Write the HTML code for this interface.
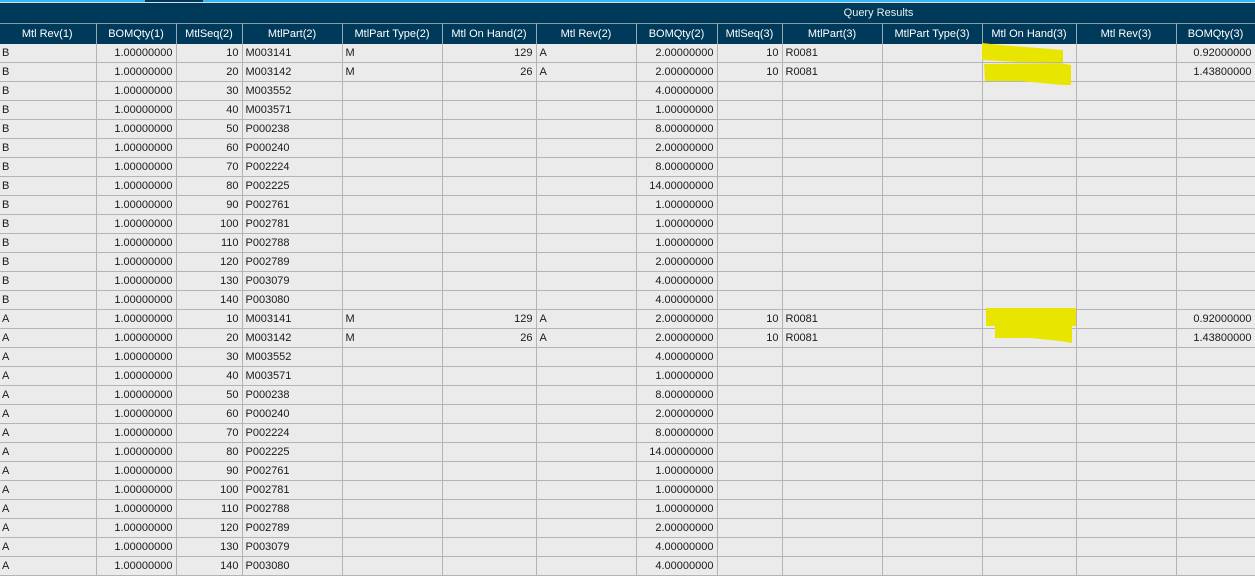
<!DOCTYPE html>
<html><head><meta charset="utf-8"><style>
*{margin:0;padding:0;box-sizing:border-box}
body{width:1255px;height:564px;overflow:hidden;background:#ebebeb;font-family:"Liberation Sans",Arial,sans-serif;font-size:11px;color:#1a1a1a;position:relative}
#top{position:absolute;left:0;top:0;width:1255px;height:2px;background:#3ab4f2}
#tab{position:absolute;left:145px;top:0;width:58px;height:2px;background:#003a5a}
#gap{position:absolute;left:0;top:2px;width:1255px;height:1px;background:#d8dde0}
#title{position:absolute;left:0;top:3px;width:1255px;height:20px;background:#003a5a;color:#e6eef2;text-align:center;padding-left:502px;line-height:21px;font-size:11px}
table{position:absolute;left:-1px;top:23px;border-collapse:collapse;table-layout:fixed;width:1256px}
th{background:#003a5a;color:#fff;font-weight:normal;height:20px;border-top:1px solid #8a9aa4;border-right:1px solid #9aa8b0;text-align:center;white-space:nowrap;overflow:hidden}
td{height:19px;border-right:1px solid #b4b4b4;border-bottom:1px solid #b4b4b4;padding:0 3px;white-space:nowrap;overflow:hidden;line-height:18px}
td.r{text-align:right}
#hl{position:absolute;left:0;top:0}
</style></head><body>
<div id="top"></div><div id="tab"></div><div id="gap"></div>
<div id="title">Query Results</div>
<table>
<colgroup><col style="width:97px"><col style="width:80px"><col style="width:66px"><col style="width:100px"><col style="width:100px"><col style="width:94px"><col style="width:100px"><col style="width:81px"><col style="width:65px"><col style="width:100px"><col style="width:100px"><col style="width:94px"><col style="width:100px"><col style="width:79px"></colgroup>
<tr><th>Mtl Rev(1)</th><th>BOMQty(1)</th><th>MtlSeq(2)</th><th>MtlPart(2)</th><th>MtlPart Type(2)</th><th>Mtl On Hand(2)</th><th>Mtl Rev(2)</th><th>BOMQty(2)</th><th>MtlSeq(3)</th><th>MtlPart(3)</th><th>MtlPart Type(3)</th><th>Mtl On Hand(3)</th><th>Mtl Rev(3)</th><th>BOMQty(3)</th></tr>
<tr><td>B</td><td class="r">1.00000000</td><td class="r">10</td><td>M003141</td><td>M</td><td class="r">129</td><td>A</td><td class="r">2.00000000</td><td class="r">10</td><td>R0081</td><td></td><td></td><td></td><td class="r">0.92000000</td></tr>
<tr><td>B</td><td class="r">1.00000000</td><td class="r">20</td><td>M003142</td><td>M</td><td class="r">26</td><td>A</td><td class="r">2.00000000</td><td class="r">10</td><td>R0081</td><td></td><td></td><td></td><td class="r">1.43800000</td></tr>
<tr><td>B</td><td class="r">1.00000000</td><td class="r">30</td><td>M003552</td><td></td><td></td><td></td><td class="r">4.00000000</td><td></td><td></td><td></td><td></td><td></td><td></td></tr>
<tr><td>B</td><td class="r">1.00000000</td><td class="r">40</td><td>M003571</td><td></td><td></td><td></td><td class="r">1.00000000</td><td></td><td></td><td></td><td></td><td></td><td></td></tr>
<tr><td>B</td><td class="r">1.00000000</td><td class="r">50</td><td>P000238</td><td></td><td></td><td></td><td class="r">8.00000000</td><td></td><td></td><td></td><td></td><td></td><td></td></tr>
<tr><td>B</td><td class="r">1.00000000</td><td class="r">60</td><td>P000240</td><td></td><td></td><td></td><td class="r">2.00000000</td><td></td><td></td><td></td><td></td><td></td><td></td></tr>
<tr><td>B</td><td class="r">1.00000000</td><td class="r">70</td><td>P002224</td><td></td><td></td><td></td><td class="r">8.00000000</td><td></td><td></td><td></td><td></td><td></td><td></td></tr>
<tr><td>B</td><td class="r">1.00000000</td><td class="r">80</td><td>P002225</td><td></td><td></td><td></td><td class="r">14.00000000</td><td></td><td></td><td></td><td></td><td></td><td></td></tr>
<tr><td>B</td><td class="r">1.00000000</td><td class="r">90</td><td>P002761</td><td></td><td></td><td></td><td class="r">1.00000000</td><td></td><td></td><td></td><td></td><td></td><td></td></tr>
<tr><td>B</td><td class="r">1.00000000</td><td class="r">100</td><td>P002781</td><td></td><td></td><td></td><td class="r">1.00000000</td><td></td><td></td><td></td><td></td><td></td><td></td></tr>
<tr><td>B</td><td class="r">1.00000000</td><td class="r">110</td><td>P002788</td><td></td><td></td><td></td><td class="r">1.00000000</td><td></td><td></td><td></td><td></td><td></td><td></td></tr>
<tr><td>B</td><td class="r">1.00000000</td><td class="r">120</td><td>P002789</td><td></td><td></td><td></td><td class="r">2.00000000</td><td></td><td></td><td></td><td></td><td></td><td></td></tr>
<tr><td>B</td><td class="r">1.00000000</td><td class="r">130</td><td>P003079</td><td></td><td></td><td></td><td class="r">4.00000000</td><td></td><td></td><td></td><td></td><td></td><td></td></tr>
<tr><td>B</td><td class="r">1.00000000</td><td class="r">140</td><td>P003080</td><td></td><td></td><td></td><td class="r">4.00000000</td><td></td><td></td><td></td><td></td><td></td><td></td></tr>
<tr><td>A</td><td class="r">1.00000000</td><td class="r">10</td><td>M003141</td><td>M</td><td class="r">129</td><td>A</td><td class="r">2.00000000</td><td class="r">10</td><td>R0081</td><td></td><td></td><td></td><td class="r">0.92000000</td></tr>
<tr><td>A</td><td class="r">1.00000000</td><td class="r">20</td><td>M003142</td><td>M</td><td class="r">26</td><td>A</td><td class="r">2.00000000</td><td class="r">10</td><td>R0081</td><td></td><td></td><td></td><td class="r">1.43800000</td></tr>
<tr><td>A</td><td class="r">1.00000000</td><td class="r">30</td><td>M003552</td><td></td><td></td><td></td><td class="r">4.00000000</td><td></td><td></td><td></td><td></td><td></td><td></td></tr>
<tr><td>A</td><td class="r">1.00000000</td><td class="r">40</td><td>M003571</td><td></td><td></td><td></td><td class="r">1.00000000</td><td></td><td></td><td></td><td></td><td></td><td></td></tr>
<tr><td>A</td><td class="r">1.00000000</td><td class="r">50</td><td>P000238</td><td></td><td></td><td></td><td class="r">8.00000000</td><td></td><td></td><td></td><td></td><td></td><td></td></tr>
<tr><td>A</td><td class="r">1.00000000</td><td class="r">60</td><td>P000240</td><td></td><td></td><td></td><td class="r">2.00000000</td><td></td><td></td><td></td><td></td><td></td><td></td></tr>
<tr><td>A</td><td class="r">1.00000000</td><td class="r">70</td><td>P002224</td><td></td><td></td><td></td><td class="r">8.00000000</td><td></td><td></td><td></td><td></td><td></td><td></td></tr>
<tr><td>A</td><td class="r">1.00000000</td><td class="r">80</td><td>P002225</td><td></td><td></td><td></td><td class="r">14.00000000</td><td></td><td></td><td></td><td></td><td></td><td></td></tr>
<tr><td>A</td><td class="r">1.00000000</td><td class="r">90</td><td>P002761</td><td></td><td></td><td></td><td class="r">1.00000000</td><td></td><td></td><td></td><td></td><td></td><td></td></tr>
<tr><td>A</td><td class="r">1.00000000</td><td class="r">100</td><td>P002781</td><td></td><td></td><td></td><td class="r">1.00000000</td><td></td><td></td><td></td><td></td><td></td><td></td></tr>
<tr><td>A</td><td class="r">1.00000000</td><td class="r">110</td><td>P002788</td><td></td><td></td><td></td><td class="r">1.00000000</td><td></td><td></td><td></td><td></td><td></td><td></td></tr>
<tr><td>A</td><td class="r">1.00000000</td><td class="r">120</td><td>P002789</td><td></td><td></td><td></td><td class="r">2.00000000</td><td></td><td></td><td></td><td></td><td></td><td></td></tr>
<tr><td>A</td><td class="r">1.00000000</td><td class="r">130</td><td>P003079</td><td></td><td></td><td></td><td class="r">4.00000000</td><td></td><td></td><td></td><td></td><td></td><td></td></tr>
<tr><td>A</td><td class="r">1.00000000</td><td class="r">140</td><td>P003080</td><td></td><td></td><td></td><td class="r">4.00000000</td><td></td><td></td><td></td><td></td><td></td><td></td></tr>
</table>
<svg id="hl" width="1255" height="564">
<polygon fill="#e8e600" points="982,43 1000,45 1063,50 1063,62 1020,62 982,60"/>
<polygon fill="#e8e600" points="984,64 1060,63 1071,65 1071,85 1063,85 1020,81 985,81"/>
<polygon fill="#e8e600" points="986,308 1076,308 1076,326 1072,326 1072,343 1060,341 1030,338 995,338 995,326 986,326"/>
</svg>
</body></html>
